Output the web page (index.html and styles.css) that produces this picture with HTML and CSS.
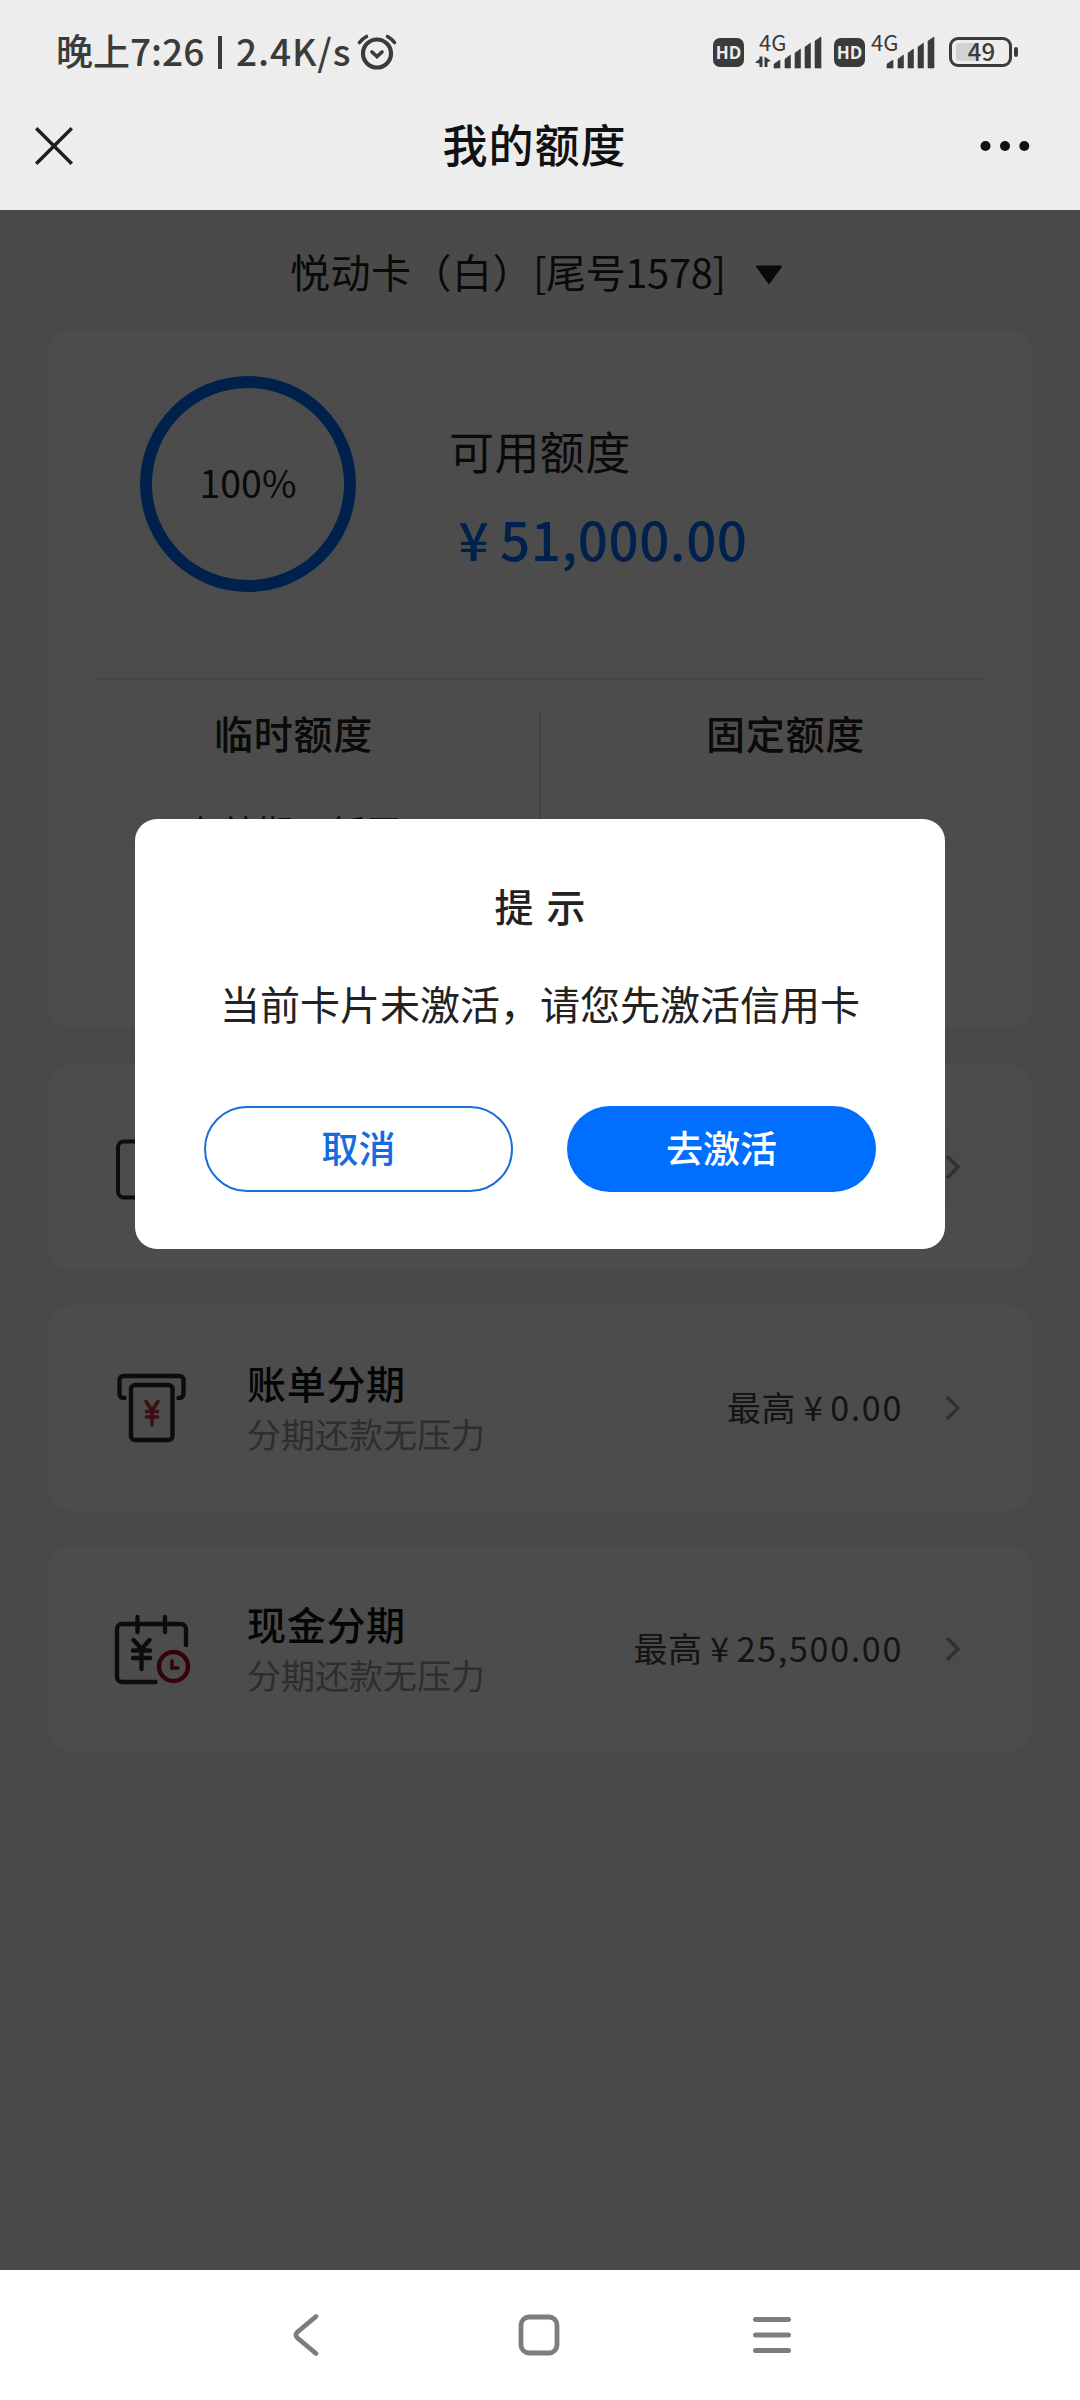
FILE: index.html
```html
<!DOCTYPE html>
<html lang="zh-CN">
<head>
<meta charset="utf-8">
<title>我的额度</title>
<link rel="stylesheet" href="styles.css">
</head>
<body>
<div class="screen">
  <header class="top">
    <div class="status">
      <span class="clock">晚上7:26</span><span class="bar"></span><span class="speed">2.4K/s</span>
      <svg class="alarm" width="42" height="40" viewBox="0 0 42 40" fill="none" stroke="#3b3b3b" stroke-linecap="round">
        <circle cx="21" cy="21.500" r="14" stroke-width="4.200"/>
        <path d="M16 20l5 4.500 5-4.500" stroke-width="3.600"/>
        <path d="M3.500 10.500a22 22 0 0 1 7-6M38.500 10.500a22 22 0 0 0-7-6" stroke-width="3.600"/>
      </svg>
      <span class="hd">HD</span>
      <span class="signal signal-a"><span class="net">4G</span>
        <svg width="68" height="34" viewBox="0 0 68 34" fill="#3b3b3b">
          <path d="M7.500 19.500v10.500H4.500V26.500L0 25.500 4.500 22V19.500zM9.500 19.500l6.500 4.500-3.500 1v5h-3z"/>
          <path d="M19 27l6-4v8h-6zM30 22l5.500-4v13H30zM40 16l5.500-4v19H40zM50 10l5.500-4v25H50zM60 4l6-4v31h-6z" stroke="#3b3b3b" stroke-linejoin="round" stroke-width=".6"/>
        </svg>
      </span>
      <span class="hd">HD</span>
      <span class="signal signal-b"><span class="net">4G</span>
        <svg width="68" height="34" viewBox="0 0 68 34" fill="#3b3b3b">
          <path d="M20 27l6-4v8h-6zM31 22l5.500-4v13H31zM41 16l5.500-4v19H41zM51 10l5.500-4v25H51zM61 4l6-4v31h-6z" stroke="#3b3b3b" stroke-linejoin="round" stroke-width=".6"/>
        </svg>
      </span>
      <span class="battery"><span class="level"></span><span class="percent">49</span></span><span class="cap"></span>
    </div>
    <div class="titlebar">
      <svg width="38" height="38" viewBox="0 0 38 38" stroke="#1e1e1e" stroke-width="3.400"><path d="M1.200 1.200l35.600 35.600M36.800 1.200L1.200 36.800"/></svg>
      <h1>我的额度</h1>
      <svg width="50" height="12" viewBox="0 0 50 12" fill="#111"><circle cx="5.500" cy="6" r="5"/><circle cx="25" cy="6" r="5"/><circle cx="44.300" cy="6" r="5"/></svg>
    </div>
  </header>

  <main class="page">
    <div class="picker"><span class="picker-name"><span class="card-name">悦动卡（白）</span><span class="card-tail">[尾号1578]</span></span>
      <svg width="28" height="20" viewBox="0 0 28 20"><path d="M2 1.500h24L14 18z" fill="#222" stroke="#222" stroke-width="2" stroke-linejoin="round"/></svg>
    </div>
    <section class="card summary">
      <div class="available">
        <div class="ring">100%</div>
        <div>
          <div class="available-label">可用额度</div>
          <div class="available-sum"><span class="yen">¥</span>51,000.00</div>
        </div>
      </div>
      <div class="split">
        <div class="half"><h2>临时额度</h2><p>有效期：暂无</p></div>
        <div class="half"><h2>固定额度</h2></div>
      </div>
    </section>
    <section class="card row">
      <svg class="icon" width="80" height="80" viewBox="0 0 80 80" fill="none" stroke="#2b2b2b" stroke-width="4"><rect x="9" y="14.500" width="60" height="56" rx="6"/></svg>
      <div class="go"><svg width="16" height="26" viewBox="0 0 16 26"><path d="M2 2l11 11L2 24" fill="none" stroke="#a4a4a4" stroke-width="3.500"/></svg></div>
    </section>
    <section class="card row">
      <svg class="icon" width="80" height="80" viewBox="0 0 80 80" fill="none" stroke="#2b2b2b" stroke-width="4.400" stroke-linecap="round">
        <path d="M15.500 30h-1a4 4 0 0 1-4-4V12a4 4 0 0 1 4-4h56a4 4 0 0 1 4 4v14a4 4 0 0 1-4 4h-1"/>
        <rect x="22" y="17" width="41.500" height="55" rx="4"/>
        <path d="M37 33.500l6 9 6-9M43 42.500V57M37.500 43.500h11M37.500 49h11" stroke="#c8323c" stroke-width="3.500"/>
      </svg>
      <div class="info"><h3>账单分期</h3><p>分期还款无压力</p></div>
      <div class="limit">最高<span class="yen">¥</span><span class="num">0.00</span></div>
      <div class="go"><svg width="16" height="26" viewBox="0 0 16 26"><path d="M2 2l11 11L2 24" fill="none" stroke="#a4a4a4" stroke-width="3.500"/></svg></div>
    </section>
    <section class="card row">
      <svg class="icon" width="80" height="80" viewBox="0 0 80 80" fill="none" stroke="#2b2b2b" stroke-width="4.400" stroke-linecap="round">
        <path d="M46.500 73H13a5 5 0 0 1-5-5V20a5 5 0 0 1 5-5h59a5 5 0 0 1 5 5v16"/>
        <path d="M28.500 8v15M56 8v15M24.500 31l8 9 8-9M32.500 40v20M24 41.500h17M24 49h17"/>
        <circle cx="64.500" cy="57.500" r="14.500" stroke="#aa0a1e"/><path d="M63 52v7h6" stroke="#aa0a1e" stroke-width="3.500"/>
      </svg>
      <div class="info"><h3>现金分期</h3><p>分期还款无压力</p></div>
      <div class="limit">最高<span class="yen">¥</span><span class="num">25,500.00</span></div>
      <div class="go"><svg width="16" height="26" viewBox="0 0 16 26"><path d="M2 2l11 11L2 24" fill="none" stroke="#a4a4a4" stroke-width="3.500"/></svg></div>
    </section>

    <div class="mask">
      <div class="dialog" role="dialog">
        <h2>提 示</h2>
        <p>当前卡片未激活，请您先激活信用卡</p>
        <div class="actions"><button class="btn cancel">取消</button><button class="btn confirm">去激活</button></div>
      </div>
    </div>
  </main>

  <nav class="nav">
    <svg width="28" height="44" viewBox="0 0 28 44"><path d="M24 3.500L5.500 19q-3.200 3 0 6L24 40.500" fill="none" stroke="#7d7d7d" stroke-width="4.800" stroke-linecap="round"/></svg>
    <svg width="42" height="42" viewBox="0 0 42 42"><rect x="3" y="3" width="36" height="36" rx="8" fill="none" stroke="#7d7d7d" stroke-width="4.800"/></svg>
    <svg width="40" height="38" viewBox="0 0 40 38"><path d="M3.500 3.500h33M3.500 19h33M3.500 34.500h33" stroke="#7d7d7d" stroke-width="5" stroke-linecap="round"/></svg>
  </nav>
</div>
</body>
</html>
```
FILE: styles.css
```css
* { box-sizing: border-box; }
body, h1, h2, h3, p { margin: 0; font-weight: 400; }
body { font-family: "Noto Sans CJK SC", sans-serif; color: #222; }
svg { display: block; flex: none; overflow: visible; }
.screen { width: 1080px; height: 2400px; display: flex; flex-direction: column; overflow: hidden; white-space: nowrap; }

.top { height: 210px; background: #ededed; flex: none; }
.status { height: 104px; padding-left: 56px; display: flex; align-items: center; color: #3b3b3b; font-size: 37px; line-height: 40px; font-weight: 500; }
.clock { width: 162px; padding-bottom: 4px; }
.bar { width: 4px; height: 33px; background: #3b3b3b; margin-right: 14px; }
.speed { width: 120px; letter-spacing: .9px; padding-bottom: 4px; }
.alarm { margin-right: 315px; }
.hd { width: 31px; height: 29px; border-radius: 7px; background: #3b3b3b; color: #ededed; font: 700 17px/29px "Open Sans", sans-serif; text-align: center; }
.signal { width: 68px; height: 34px; position: relative; }
.signal svg { margin-top: 2px; }
.signal-a { margin: 0 11px 0 11px; }
.signal-b { margin: 0 14px 0 2px; }
.net { position: absolute; left: 4px; top: -4px; font: 400 22px/20px "Noto Sans CJK SC", sans-serif; }
.battery { width: 63px; height: 30px; border: 3px solid #3b3b3b; border-radius: 9px; position: relative; text-align: center; }
.level { position: absolute; left: 4px; top: 3px; width: 20px; height: 18px; background: #d2d2d2; border-radius: 3px; }
.percent { position: relative; display: block; font-size: 24px; line-height: 22px; padding-left: 2px; }
.cap { width: 4px; height: 10px; border-radius: 2px; background: #3b3b3b; margin-left: 2px; }
.titlebar { height: 84px; padding: 0 50px 0 35px; display: flex; align-items: center; justify-content: space-between; }
h1 { font-size: 45px; line-height: 60px; font-weight: 500; color: #111; margin-left: 16px; letter-spacing: 1px; padding-bottom: 4px; }

.page { position: relative; height: 2060px; flex: none; background: #f7f7f7; }
.picker { height: 120px; padding: 4px 0 0 290px; display: flex; align-items: center; font-size: 40px; }
.picker-name { width: 465px; padding-bottom: 3px; }
.card-name { letter-spacing: .5px; }
.card-tail { letter-spacing: -.4px; }
.picker svg { margin-top: 5px; }
.card { width: 984px; margin: 0 0 35px 48px; background: #fefefe; border-radius: 24px; box-shadow: 0 0 24px rgba(0,0,0,.05); }
.summary { height: 699px; }
.available { height: 348px; display: flex; padding: 46px 0 0 92px; }
.ring { width: 216px; height: 216px; border: 12px solid #006eff; border-radius: 50%; margin-right: 93px; text-align: center; font-size: 37.5px; line-height: 188px; color: #222; }
.available-label { font-size: 45px; line-height: 60px; margin-top: 45px; letter-spacing: .4px; }
.available-sum { font-size: 53px; line-height: 70px; color: #006eff; margin: 22px 0 0 -2px; font-weight: 500; letter-spacing: .5px; }
.yen { display: inline-block; width: 1em; text-align: center; letter-spacing: 0; }
.split { height: 350px; padding-top: 32px; display: flex; background: linear-gradient(#e4e4e4, #e4e4e4) 46px 0 / 892px 2px no-repeat; }
.half { width: 491px; text-align: center; height: 200px; }
.half + .half { border-left: 2px solid #e4e4e4; }
.half h2 { font-size: 39px; line-height: 50px; letter-spacing: .8px; font-weight: 500; margin-top: -3px; }
.half p { font-size: 36px; line-height: 50px; margin-top: 49px; }
.row { height: 206px; padding: 0 46px 0 61px; display: flex; align-items: center; }
.icon { margin-right: 58px; }
.info h3 { font-size: 39px; line-height: 52px; letter-spacing: .7px; font-weight: 500; color: #111; margin: -3px 0 3px; }
.info p { font-size: 34px; line-height: 48px; color: #999; margin-top: -1px; }
.limit { margin-left: auto; font-size: 34px; color: #444; padding-bottom: 3px; letter-spacing: .6px; }
.limit .yen { width: 34px; }
.num { letter-spacing: 1.7px; }
.go { width: 68px; height: 68px; border-radius: 50%; background: #fafafa; margin-left: 15px; padding-left: 2px; display: flex; align-items: center; justify-content: center; }
.row > .icon + .go { margin-left: auto; }

.mask { position: absolute; inset: 0; background: rgba(0,0,0,.7); padding: 609px 135px 0; }
.dialog { height: 430px; background: #fff; border-radius: 22px; padding: 56px 69px 0; text-align: center; color: #222; }
.dialog h2 { font-size: 39px; line-height: 60px; font-weight: 500; word-spacing: 4px; }
.dialog p { font-size: 40px; line-height: 60px; margin-top: 38px; }
.actions { display: flex; justify-content: space-between; margin-top: 73px; }
.btn { width: 309px; height: 86px; border-radius: 43px; font: 500 37px/50px "Noto Sans CJK SC", sans-serif; padding: 0 0 4px; }
.cancel { border: 2px solid #1b6dd8; background: #fff; color: #156be0; }
.confirm { border: 0; background: #006eff; color: #fff; }

.nav { height: 130px; background: #fff; display: flex; align-items: center; padding-left: 292px; }
.nav svg + svg { margin-left: 198px; }
.nav svg:last-child { margin-left: 192px; }
```
